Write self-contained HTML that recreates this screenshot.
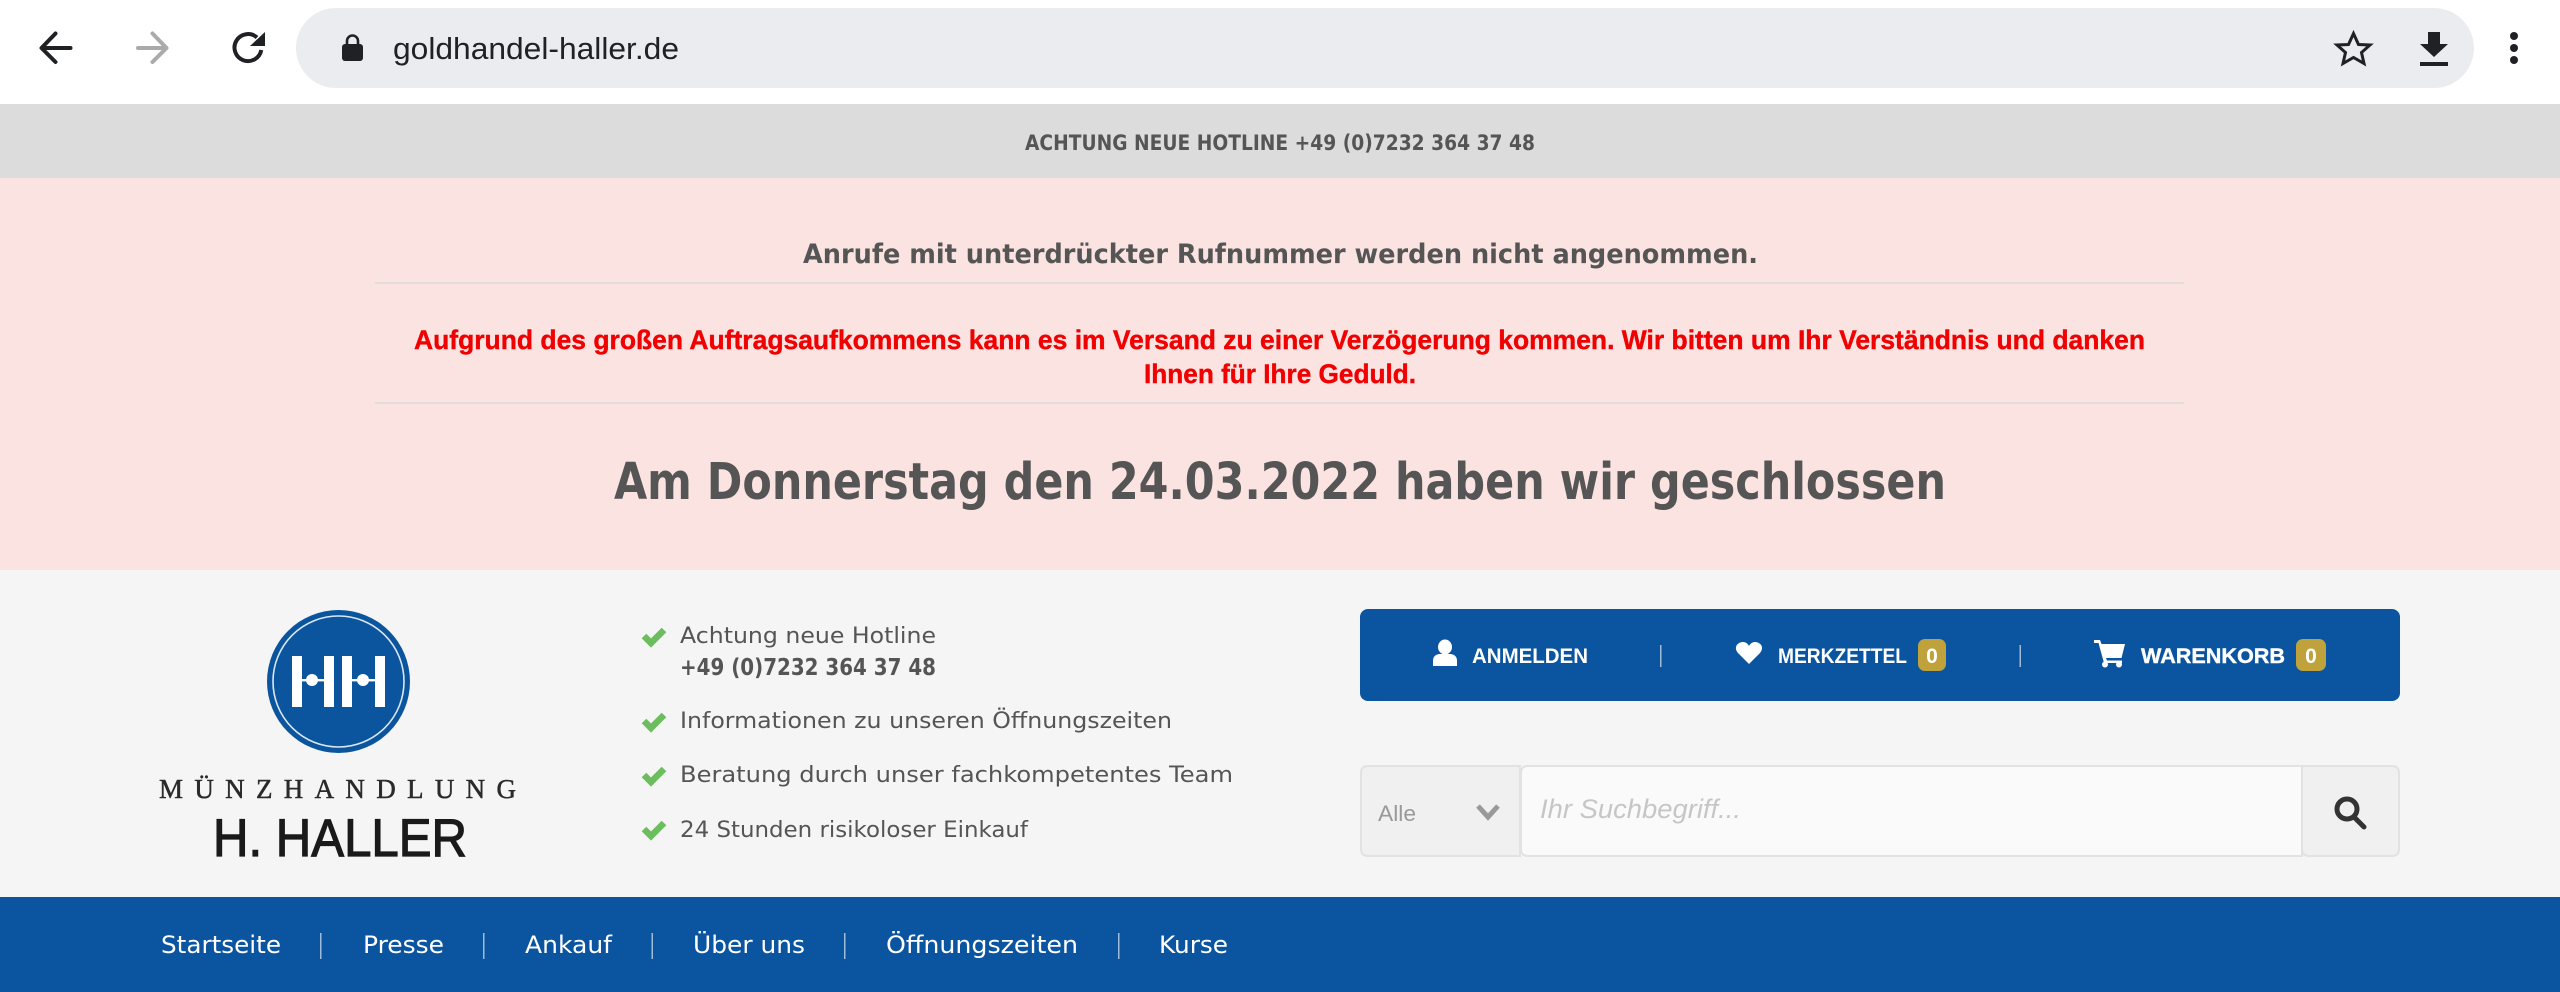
<!DOCTYPE html>
<html lang="de">
<head>
<meta charset="utf-8">
<title>goldhandel-haller.de</title>
<style>
html,body{margin:0;padding:0;width:2560px;height:992px;overflow:hidden;background:#fff}
svg{display:block}
text{font-family:"Liberation Sans",sans-serif}
.p{font-family:"DejaVu Sans",sans-serif}
.d{fill:#555}
.b{font-weight:700}
.w{fill:#fff}
</style>
</head>
<body>
<svg width="2560" height="992" viewBox="0 0 2560 992" xmlns="http://www.w3.org/2000/svg">
<!-- toolbar -->
<rect width="2560" height="104" fill="#fff"/>
<rect x="296" y="8" width="2178" height="80" rx="40" fill="#ebecf0"/>
<path d="M70.5 48H43M55.5 33.5L41.5 48L55.5 62" fill="none" stroke="#202124" stroke-width="4" stroke-linecap="round" stroke-linejoin="round"/>
<path d="M138 48H165.5M152.5 33.5L166.5 48L152.5 62" fill="none" stroke="#aaa" stroke-width="4" stroke-linecap="round" stroke-linejoin="round"/>
<path d="M257 37.5A13.5 13.5 0 1 0 261.3 50" fill="none" stroke="#202124" stroke-width="4"/>
<path d="M265 32V46H250Z" fill="#202124"/>
<rect x="342" y="44" width="21" height="17" rx="3" fill="#202124"/>
<path d="M347 45V41a5.5 5.5 0 0 1 11 0V45" fill="none" stroke="#202124" stroke-width="2.6"/>
<text x="393" y="59" font-size="31" fill="#202124" textLength="286" lengthAdjust="spacingAndGlyphs">goldhandel-haller.de</text>
<path d="M2353.5 33.5L2358.5 44.5L2370 45L2361.5 52.5L2364 63.5L2353.5 57.5L2343 63.5L2345.5 52.5L2337 45L2348.5 44.5Z" fill="none" stroke="#202124" stroke-width="3"/>
<path d="M2428 32H2440V44H2448L2434 57L2420 44H2428Z" fill="#202124"/>
<rect x="2420" y="62" width="28" height="4" fill="#202124"/>
<circle cx="2514" cy="36" r="4" fill="#202124"/><circle cx="2514" cy="48" r="4" fill="#202124"/><circle cx="2514" cy="60" r="4" fill="#202124"/>

<!-- hotline band -->
<rect y="104" width="2560" height="74" fill="#dcdcdc"/>
<text class="p d b" x="1025" y="150" font-size="21" textLength="510" lengthAdjust="spacingAndGlyphs">ACHTUNG NEUE HOTLINE +49 (0)7232 364 37 48</text>

<!-- notice -->
<rect y="178" width="2560" height="392" fill="#fae3e0"/>
<text class="p d b" x="803" y="263" font-size="27" textLength="955" lengthAdjust="spacingAndGlyphs">Anrufe mit unterdrückter Rufnummer werden nicht angenommen.</text>
<rect x="375" y="282" width="1809" height="2" fill="#e3dcda"/>
<text class="b" x="414" y="349" font-size="27" fill="#f00000" stroke="#f00000" stroke-width=".4" textLength="1731" lengthAdjust="spacingAndGlyphs">Aufgrund des großen Auftragsaufkommens kann es im Versand zu einer Verzögerung kommen. Wir bitten um Ihr Verständnis und danken</text>
<text class="b" x="1144" y="383" font-size="27" fill="#f00000" stroke="#f00000" stroke-width=".4" textLength="272" lengthAdjust="spacingAndGlyphs">Ihnen für Ihre Geduld.</text>
<rect x="375" y="402" width="1809" height="2" fill="#e3dcda"/>
<text class="p d b" x="614" y="499" font-size="51" textLength="1332" lengthAdjust="spacingAndGlyphs">Am Donnerstag den 24.03.2022 haben wir geschlossen</text>

<!-- header -->
<rect y="570" width="2560" height="327" fill="#f5f5f5"/>
<!-- logo -->
<circle cx="338.5" cy="681.5" r="71.5" fill="#0b559f"/>
<circle cx="338.5" cy="681.5" r="65.5" fill="none" stroke="#dbe7f3" stroke-width="1.6"/>
<g fill="#fff">
<rect x="292" y="656" width="10" height="51"/><rect x="324" y="656" width="10" height="51"/>
<rect x="342" y="656" width="10" height="51"/><rect x="375" y="656" width="10" height="51"/>
<rect x="300" y="679" width="26" height="2.4"/><rect x="351" y="679" width="26" height="2.4"/>
<circle cx="312" cy="680" r="6"/><circle cx="363" cy="680" r="6"/>
</g>
<text x="159" y="798" font-size="27" fill="#2a2a2a" style="font-family:'Liberation Serif',serif" stroke="#2a2a2a" stroke-width=".5" textLength="357" lengthAdjust="spacing">MÜNZHANDLUNG</text>
<text x="213" y="856" font-size="53" fill="#1a1a1a" stroke="#1a1a1a" stroke-width="1.2" textLength="254" lengthAdjust="spacingAndGlyphs">H. HALLER</text>

<!-- list -->
<g fill="none" stroke="#6cbd5e" stroke-width="6.5">
<path d="M644 636L651 643L664 630"/>
<path d="M644 721L651 728L664 715"/>
<path d="M644 775L651 782L664 769"/>
<path d="M644 829L651 836L664 823"/>
</g>
<text class="p d" x="680" y="643" font-size="22" textLength="256" lengthAdjust="spacingAndGlyphs">Achtung neue Hotline</text>
<text class="p d b" x="680" y="675" font-size="23" textLength="256" lengthAdjust="spacingAndGlyphs">+49 (0)7232 364 37 48</text>
<text class="p d" x="680" y="728" font-size="22" textLength="492" lengthAdjust="spacingAndGlyphs">Informationen zu unseren Öffnungszeiten</text>
<text class="p d" x="680" y="782" font-size="22" textLength="553" lengthAdjust="spacingAndGlyphs">Beratung durch unser fachkompetentes Team</text>
<text class="p d" x="680" y="837" font-size="22" textLength="348" lengthAdjust="spacingAndGlyphs">24 Stunden risikoloser Einkauf</text>

<!-- account bar -->
<rect x="1360" y="609" width="1040" height="92" rx="8" fill="#0b549f"/>
<ellipse cx="1445" cy="647" rx="7" ry="7.5" fill="#fff"/>
<path d="M1433 666V661Q1433 655 1439 654H1451Q1457 655 1457 661V666Z" fill="#fff"/>
<text class="w b" x="1472" y="663" font-size="21" textLength="116" lengthAdjust="spacingAndGlyphs">ANMELDEN</text>
<rect x="1660" y="645" width="1.5" height="22" fill="#9fbcd9"/>
<path d="M1749 664L1738 653C1733 647 1738 642 1743 642C1746 642 1748 644 1749 646C1750 644 1752 642 1755 642C1760 642 1765 647 1760 653Z" fill="#fff"/>
<text class="w b" x="1778" y="663" font-size="21" textLength="129" lengthAdjust="spacingAndGlyphs">MERKZETTEL</text>
<rect x="1918" y="639" width="28" height="32" rx="7" fill="#bfa23c"/>
<text class="w b" x="1932" y="663" font-size="21" text-anchor="middle">0</text>
<rect x="2019.5" y="645" width="1.5" height="22" fill="#9fbcd9"/>
<path d="M2094 640H2100L2101.5 644H2125L2121.5 658H2106L2107 660.5H2122V663H2104L2098.5 643H2094Z" fill="#fff"/>
<circle cx="2105" cy="664.5" r="3" fill="#fff"/><circle cx="2119" cy="664.5" r="3" fill="#fff"/>
<text class="w b" x="2141" y="663" font-size="21" stroke="#fff" stroke-width=".4" textLength="144" lengthAdjust="spacingAndGlyphs">WARENKORB</text>
<rect x="2296" y="639" width="30" height="32" rx="7" fill="#bfa23c"/>
<text class="w b" x="2311" y="663" font-size="21" text-anchor="middle">0</text>

<!-- search -->
<path d="M1368 766H1520V856H1368Q1361 856 1361 849V773Q1361 766 1368 766Z" fill="#f0f0f0" stroke="#e2e2e2" stroke-width="2"/>
<text x="1378" y="821" font-size="22" fill="#999" textLength="38" lengthAdjust="spacingAndGlyphs">Alle</text>
<path d="M1478 806L1488 817L1498 806" fill="none" stroke="#999" stroke-width="5"/>
<path d="M1528 766H2302V856H1528Q1521 856 1521 849V773Q1521 766 1528 766Z" fill="#fafafa" stroke="#e2e2e2" stroke-width="2"/>
<text x="1540" y="818" font-size="27" fill="#c6c6c6" font-style="italic" textLength="201" lengthAdjust="spacingAndGlyphs">Ihr Suchbegriff...</text>
<path d="M2302 766H2392Q2399 766 2399 773V849Q2399 856 2392 856H2309Q2302 856 2302 849Z" fill="#f0f0f0" stroke="#e2e2e2" stroke-width="2"/>
<circle cx="2347" cy="809" r="10" fill="none" stroke="#333" stroke-width="5"/>
<path d="M2354 817L2364 827" fill="none" stroke="#333" stroke-width="5" stroke-linecap="round"/>

<!-- nav -->
<rect y="897" width="2560" height="95" fill="#0b549f"/>
<g fill="#9fbcd9">
<rect x="320" y="933" width="1.5" height="26"/><rect x="483" y="933" width="1.5" height="26"/>
<rect x="651.5" y="933" width="1.5" height="26"/><rect x="844" y="933" width="1.5" height="26"/>
<rect x="1118" y="933" width="1.5" height="26"/>
</g>
<g>
<text class="p w" x="161" y="953" font-size="24" textLength="120" lengthAdjust="spacingAndGlyphs">Startseite</text>
<text class="p w" x="363" y="953" font-size="24" textLength="81" lengthAdjust="spacingAndGlyphs">Presse</text>
<text class="p w" x="525" y="953" font-size="24" textLength="87" lengthAdjust="spacingAndGlyphs">Ankauf</text>
<text class="p w" x="693" y="953" font-size="24" textLength="112" lengthAdjust="spacingAndGlyphs">Über uns</text>
<text class="p w" x="886" y="953" font-size="24" textLength="192" lengthAdjust="spacingAndGlyphs">Öffnungszeiten</text>
<text class="p w" x="1159" y="953" font-size="24" textLength="69" lengthAdjust="spacingAndGlyphs">Kurse</text>
</g>
</svg>
</body>
</html>
